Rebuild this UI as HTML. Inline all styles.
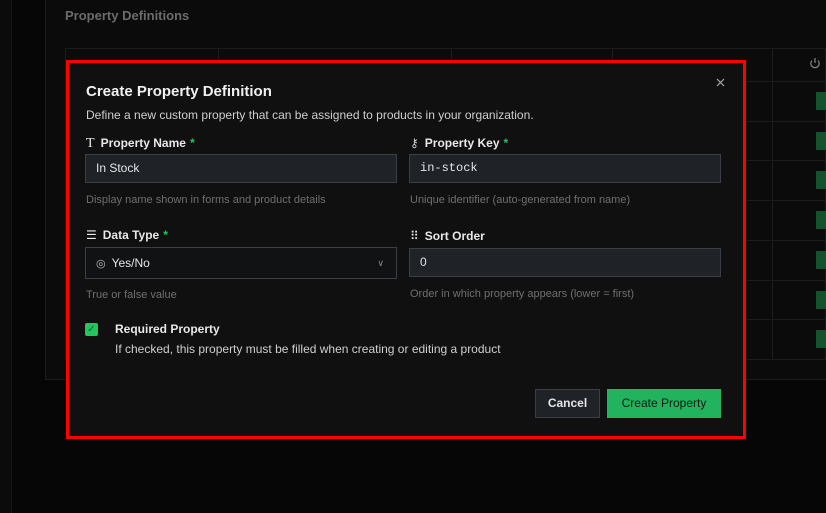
<!DOCTYPE html>
<html><head><style>
*{box-sizing:border-box;margin:0;padding:0}
body{width:826px;height:513px;background:#060606;font-family:"Liberation Sans",sans-serif;position:relative;overflow:hidden;color:#e5e5e5}
.abs{position:absolute}
.lbl{font-size:12px;font-weight:bold;color:#e8e8e8}
.star{color:#22c55e;margin-left:4px}
.inp{position:absolute;height:29px;background:#1f2227;border:1px solid #3a3f47;font-size:12px;color:#e5e5e5;padding:0 10px;line-height:27px}
.hint{position:absolute;font-size:11px;color:#6f6f6f}
.vl{position:absolute;width:1px;background:#1c1c1c}
.hl{position:absolute;height:1px;background:#1c1c1c;left:65px;width:761px}
.badge{position:absolute;left:816px;width:12px;height:18px;background:#14532d}
</style></head><body>
<div class="abs" style="left:0;top:0;width:12px;height:513px;background:#0b0b0b;border-right:1px solid #161616"></div>
<div class="abs" style="left:45px;top:0;width:790px;height:380px;background:#0b0b0b;border-left:1px solid #1c1c1c;border-bottom:1px solid #1c1c1c"></div>
<div class="abs" style="left:65px;top:8px;font-size:13px;font-weight:bold;color:#6b6b6b">Property Definitions</div>
<div class="abs" style="left:65px;top:48px;width:761px;height:312px;border:1px solid #1c1c1c"></div>
<div class="hl" style="top:81px"></div><div class="hl" style="top:121px"></div><div class="hl" style="top:160px"></div><div class="hl" style="top:200px"></div><div class="hl" style="top:240px"></div><div class="hl" style="top:280px"></div><div class="hl" style="top:319px"></div>
<div class="vl" style="left:218px;top:48px;height:312px"></div><div class="vl" style="left:451px;top:48px;height:312px"></div><div class="vl" style="left:612px;top:48px;height:312px"></div><div class="vl" style="left:772px;top:48px;height:312px"></div>
<svg class="abs" style="left:809px;top:57px" width="12" height="13" viewBox="0 0 12 13"><path d="M6 1v5M3 3.5a4.2 4.2 0 1 0 6 0" stroke="#888" fill="none" stroke-width="1.2"/></svg>
<div class="badge" style="top:92px"></div><div class="badge" style="top:132px"></div><div class="badge" style="top:171px"></div><div class="badge" style="top:211px"></div><div class="badge" style="top:251px"></div><div class="badge" style="top:291px"></div><div class="badge" style="top:330px"></div>

<div class="abs" style="left:66px;top:60px;width:680px;height:379px;border:3px solid #ff0000;background:#101010"></div>
<svg class="abs" style="left:716px;top:78px" width="9" height="9" viewBox="0 0 9 9"><path d="M1 1l7 7M8 1l-7 7" stroke="#aaa" stroke-width="1.2"/></svg>
<div class="abs" style="left:86px;top:83px;font-size:15px;font-weight:bold;color:#f0f0f0">Create Property Definition</div>
<div class="abs" style="left:86px;top:108px;font-size:12px;color:#cfcfcf">Define a new custom property that can be assigned to products in your organization.</div>

<div class="abs lbl" style="left:86px;top:136px"><span style="font-family:'Liberation Serif';font-weight:normal;font-size:14px;margin-right:6px">T</span>Property Name<span class="star">*</span></div>
<div class="inp" style="left:85px;top:154px;width:312px">In Stock</div>
<div class="hint" style="left:86px;top:194px">Display name shown in forms and product details</div>

<div class="abs lbl" style="left:410px;top:136px"><span style="font-weight:normal;margin-right:6px;color:#ccc">⚷</span>Property Key<span class="star">*</span></div>
<div class="inp" style="left:409px;top:154px;width:312px;font-family:'Liberation Mono',monospace">in-stock</div>
<div class="hint" style="left:410px;top:194px">Unique identifier (auto-generated from name)</div>

<div class="abs lbl" style="left:86px;top:228px"><span style="font-weight:normal;margin-right:6px">☰</span>Data Type<span class="star">*</span></div>
<div class="inp" style="left:85px;top:247px;width:312px;height:32px;line-height:30px;background:#111214"><span style="font-size:11px;margin-right:6px;color:#bbb">◎</span>Yes/No<span style="position:absolute;right:12px;color:#888;font-size:9px">∨</span></div>
<div class="hint" style="left:86px;top:289px">True or false value</div>

<div class="abs lbl" style="left:410px;top:229px"><span style="font-weight:normal;margin-right:6px">⠿</span>Sort Order</div>
<div class="inp" style="left:409px;top:248px;width:312px">0</div>
<div class="hint" style="left:410px;top:288px">Order in which property appears (lower = first)</div>

<div class="abs" style="left:85px;top:323px;width:13px;height:13px;background:#22c55e;border-radius:2px;color:#063;font-size:10px;text-align:center;line-height:13px">✓</div>
<div class="abs lbl" style="left:115px;top:322px">Required Property</div>
<div class="abs" style="left:115px;top:342px;font-size:12px;color:#cfcfcf">If checked, this property must be filled when creating or editing a product</div>

<div class="abs" style="left:535px;top:389px;width:65px;height:29px;background:#1f2227;border:1px solid #3a3f47;font-size:12px;font-weight:bold;color:#e5e5e5;text-align:center;line-height:27px">Cancel</div>
<div class="abs" style="left:607px;top:389px;width:114px;height:29px;background:#22b35e;font-size:12px;color:#0a1a10;text-align:center;line-height:29px">Create Property</div>
</body></html>
